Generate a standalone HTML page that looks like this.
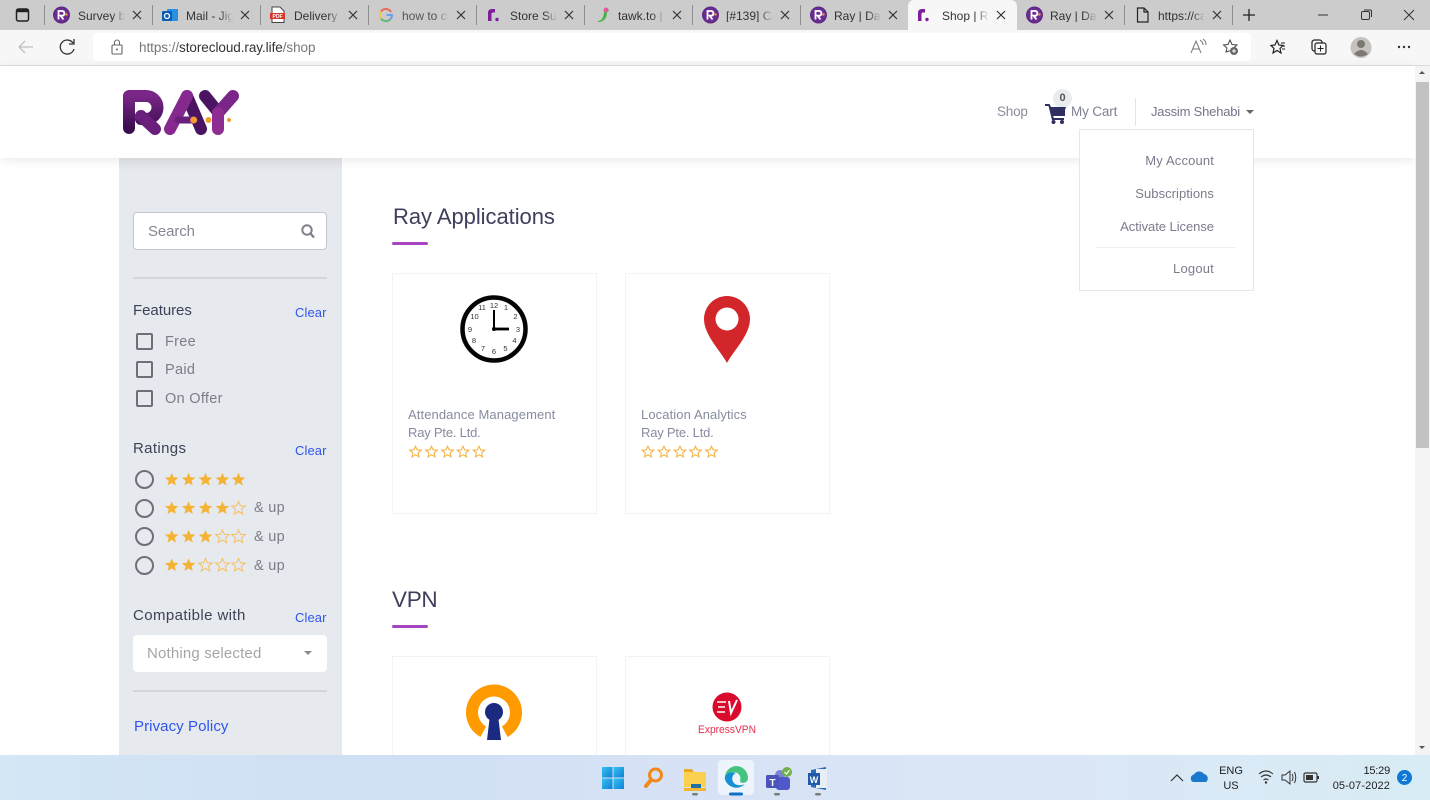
<!DOCTYPE html>
<html><head><meta charset="utf-8"><title>Shop | Ray</title>
<style>
*{box-sizing:border-box}
html,body{margin:0;padding:0;width:1430px;height:800px;overflow:hidden;background:#fff;font-family:"Liberation Sans",sans-serif}
.a{position:absolute;white-space:nowrap;line-height:1}
.tabt{font-size:12px;color:#333;top:10px;width:47px;overflow:hidden;-webkit-mask-image:linear-gradient(90deg,#000 72%,transparent);mask-image:linear-gradient(90deg,#000 72%,transparent)}
.sep{position:absolute;top:5px;width:1px;height:20px;background:#8e8e8e}
.g{color:#7d7d8a;font-size:14.5px;letter-spacing:.3px}
.h{color:#3f4256;font-size:15px;letter-spacing:.35px}
.c{color:#2f55f0;font-size:13px;letter-spacing:.1px}
.cb{position:absolute;left:136px;width:17px;height:17px;border:2px solid #6f6f7c;border-radius:2px}
.rd{position:absolute;left:135px;width:19px;height:19px;border:2px solid #6f6f7c;border-radius:50%}
.card{position:absolute;width:205px;background:#fff;border:1px solid #f2f3f7}
.ct{color:#868ba0;font-size:13px;letter-spacing:.1px}
.m{color:#7b7b8c;font-size:13px;letter-spacing:.2px;text-align:right;right:216px}
.n{color:#74748a;font-size:13.5px;letter-spacing:0}
</style></head>
<body>
<svg width="0" height="0" style="position:absolute"><defs>
<path id="st" d="M0-6.600 1.900-2.200 6.800-1.900 3 1.200 4.200 6 0 3.400-4.200 6-3 1.200-6.800-1.900-1.900-2.200Z"/>
<g id="r"><circle r="8.5" cx="8.5" cy="8.5" fill="#5f2a86"/><circle cx="8.5" cy="8.5" r="7" fill="#6b2c91"/><path d="M5.5 13V4.5H9.5A2.4 2.4 0 0 1 9.5 9.2H7.5L10.5 13" fill="none" stroke="#fff" stroke-width="1.8"/><circle cx="13.5" cy="8" r="1.2" fill="#f39a32"/></g>
<g id="rs"><path d="M0 13V5Q0 1 4 1H7V4.500H5Q3.500 4.500 3.500 6V13Z" fill="#7d1f9a"/><circle cx="9" cy="11.500" r="1.700" fill="#7d1f9a"/></g>
<g id="x"><path d="M0 0 8 8M8 0 0 8" stroke="#333" stroke-width="1.200" fill="none"/></g>
</defs></svg>

<!-- tab strip -->
<div class="a" style="left:0;top:0;width:1430px;height:30px;background:#cccccc"></div>
<svg class="a" style="left:15px;top:7px" width="16" height="16"><rect x="1.500" y="2" width="12" height="12" rx="2" fill="none" stroke="#222" stroke-width="1.500"/><rect x="1.500" y="2" width="12" height="3.200" fill="#222"/></svg>
<div class="sep" style="left:44px"></div><div class="sep" style="left:152px"></div><div class="sep" style="left:260px"></div><div class="sep" style="left:368px"></div><div class="sep" style="left:476px"></div><div class="sep" style="left:584px"></div><div class="sep" style="left:692px"></div><div class="sep" style="left:800px"></div><div class="sep" style="left:1124px"></div><div class="sep" style="left:1232px"></div>
<div class="a" style="left:908px;top:0;width:109px;height:31px;background:#f7f7f7;border-radius:6px 6px 0 0"></div>

<svg class="a" style="left:0;top:0" width="1430" height="30">
<use href="#r" x="53" y="6.500"/>
<g transform="translate(162,8)"><rect x="5" y="1" width="11" height="12" rx="1" fill="#2a8fe0"/><rect x="0" y="3" width="10" height="10" rx="1" fill="#0a5fb4"/><circle cx="5" cy="8" r="2.500" fill="none" stroke="#fff" stroke-width="1.300"/></g>
<g transform="translate(270,7)"><path d="M2 0H10L14 4V15.500H2Z" fill="#fff" stroke="#444"/><rect x="0" y="6" width="15" height="6" fill="#d9352b"/><text x="7.500" y="11" text-anchor="middle" font-family="Liberation Sans,sans-serif" font-size="5" font-weight="bold" fill="#fff">PDF</text></g>
<g transform="translate(379,8)" fill="none" stroke-width="2"><path d="M12 4A6 6 0 0 0 2 3.500" stroke="#ea6a5f"/><path d="M2 3.500A6 6 0 0 0 2 10.500" stroke="#f3c74f"/><path d="M2 10.500A6 6 0 0 0 11 11.500" stroke="#62b878"/><path d="M11 11.500A6 6 0 0 0 13 7H7.500" stroke="#6d9df0"/></g>
<use href="#rs" x="488" y="8"/><use href="#rs" x="918" y="8"/>
<g transform="translate(595,7)"><path d="M3 14C6 14 9 11 9 4L13 2 14 4 12 5C12 11 9 15 3 15Z" fill="#43b649"/><circle cx="11" cy="3" r="2.500" fill="#e45a9b"/></g>
<use href="#r" x="702" y="6.500"/><use href="#r" x="810" y="6.500"/><use href="#r" x="1026" y="6.500"/>
<g transform="translate(1136,7)"><path d="M1.500 1H8L12 5V15H1.500ZM8 1V5H12" fill="none" stroke="#222" stroke-width="1.200"/></g>
<use href="#x" x="133" y="11"/><use href="#x" x="241" y="11"/><use href="#x" x="349" y="11"/><use href="#x" x="457" y="11"/><use href="#x" x="565" y="11"/><use href="#x" x="673" y="11"/><use href="#x" x="781" y="11"/><use href="#x" x="889" y="11"/><use href="#x" x="997" y="11"/><use href="#x" x="1105" y="11"/><use href="#x" x="1213" y="11"/>
<path d="M1243 15H1255M1249 9V21" stroke="#222" stroke-width="1.300"/>
<path d="M1318 15H1328" stroke="#333"/>
<rect x="1361.500" y="11.500" width="8" height="8" rx="1.500" fill="none" stroke="#333"/><path d="M1364 10H1370.500Q1371.500 10 1371.500 11V17" fill="none" stroke="#333"/>
<path d="M1404 10 1414 20M1414 10 1404 20" stroke="#333"/>
</svg>
<div class="a tabt" style="left:78px">Survey bar</div>
<div class="a tabt" style="left:186px">Mail - Jigar</div>
<div class="a tabt" style="left:294px">Delivery Sc</div>
<div class="a tabt" style="left:402px;color:#555">how to cre</div>
<div class="a tabt" style="left:510px">Store Subs</div>
<div class="a tabt" style="left:618px">tawk.to | In</div>
<div class="a tabt" style="left:726px">[#139] CA</div>
<div class="a tabt" style="left:834px">Ray | Dash</div>
<div class="a tabt" style="left:942px">Shop | Ray</div>
<div class="a tabt" style="left:1050px">Ray | Dash</div>
<div class="a tabt" style="left:1158px">https://cal</div>

<!-- toolbar -->
<div class="a" style="left:0;top:30px;width:1430px;height:36px;background:#f7f7f7;border-bottom:1px solid #dcdcdc"></div>
<div class="a" style="left:93px;top:33px;width:1158px;height:28px;background:#fff;border-radius:4px"></div>
<svg class="a" style="left:0;top:30px" width="1430" height="36">
<path d="M19 17H33M19 17 25 11M19 17 25 23" fill="none" stroke="#c0c0c0" stroke-width="1.300"/>
<path d="M73 13A7 7 0 1 0 74 19M74 9V14H69" fill="none" stroke="#333" stroke-width="1.300"/>
<rect x="112" y="15" width="10" height="9" rx="1" fill="none" stroke="#666" stroke-width="1.100"/><path d="M114.500 15V12.500A2.500 2.500 0 0 1 119.500 12.500V15" fill="none" stroke="#666" stroke-width="1.100"/><circle cx="117" cy="19.500" r="1" fill="#666"/>
<path d="M1191 23 1196 11 1201 23M1193 19H1199M1200 10Q1203 12 1203 15M1203 9Q1206 11 1206 15" fill="none" stroke="#777" stroke-width="1"/>
<path d="M1230 10 1232 14.500 1237 15 1233.500 18 1234 21H1229L1226 22 1227 18 1223.500 15 1228 14.500Z" fill="none" stroke="#444"/><circle cx="1234" cy="21" r="4" fill="#666"/><path d="M1232 21H1236M1234 19V23" stroke="#fff"/>
<path d="M1277 10.500 1279 15 1283 15.500 1280 18.500 1281 23 1277 20.500 1273 23 1274 18.500 1271 15.500 1275 15Z" fill="none" stroke="#222" stroke-width="1.200"/><path d="M1281 13H1285M1282 16H1285M1282 19H1285" stroke="#222"/>
<rect x="1312" y="10" width="10" height="11" rx="2.500" fill="none" stroke="#222" stroke-width="1.200"/><rect x="1315" y="13" width="11" height="11" rx="2" fill="#f7f7f7" stroke="#222" stroke-width="1.200"/><path d="M1320.500 15.500V21.500M1317.500 18.500H1323.500" stroke="#222"/>
<circle cx="1361" cy="17.500" r="10.500" fill="#c6c3bf"/><circle cx="1361" cy="14" r="4" fill="#7c7873"/><path d="M1354 24Q1361 16 1368 24Q1361 29 1354 24Z" fill="#7c7873"/>
<circle cx="1399" cy="17" r="1.200" fill="#333"/><circle cx="1404" cy="17" r="1.200" fill="#333"/><circle cx="1409" cy="17" r="1.200" fill="#333"/>
</svg>
<div class="a" style="left:139px;top:40.500px;font-size:13.500px;color:#777;letter-spacing:-.06px">https://<span style="color:#333">storecloud.ray.life</span>/shop</div>

<!-- header -->
<div class="a" style="left:0;top:66px;width:1415px;height:92px;background:#fff;box-shadow:0 2px 10px rgba(0,0,0,.09)"></div>

<!-- sidebar -->
<div class="a" style="left:119px;top:158px;width:223px;height:597px;background:#e6e9ed"></div>
<div class="a" style="left:119px;top:158px;width:223px;height:12px;background:linear-gradient(180deg,rgba(0,0,0,.07),rgba(0,0,0,0))"></div>

<svg class="a" style="left:119px;top:86px" width="125" height="54" viewBox="119 86 125 54">
<defs><linearGradient id="lg2" x1="0" y1="0" x2="0" y2="1"><stop offset="0" stop-color="#7a2688"/><stop offset="1" stop-color="#3a0e4e"/></linearGradient></defs>
<g fill="none" stroke-width="12" stroke-linecap="round" stroke-linejoin="round">
<path d="M129 128V96H146A11.500 11.500 0 0 1 146 119H141" stroke="url(#lg2)"/>
<path d="M141 116 155 129" stroke="#6a1f7c"/>
<path d="M187 96 201 129" stroke="#4a1460"/><path d="M170 129 187 96" stroke="#86298f"/><path d="M178 120H192" stroke="#6a1f7c" stroke-width="7"/>
<path d="M205 96 218 112" stroke="#4a1460"/><path d="M233 96 218 113" stroke="#7a2688"/><path d="M218 113V129" stroke="#8d2d92"/>
</g>
<circle cx="193.700" cy="120" r="3.500" fill="#f39a32"/><circle cx="208.500" cy="120" r="3" fill="#f39a32"/><circle cx="229" cy="120" r="2" fill="#f39a32"/>
</svg>

<div class="a n" style="left:997px;top:105px;color:#8a8d9c;letter-spacing:-.2px">Shop</div>
<div class="a" style="left:1053px;top:89px;width:19px;height:19px;border-radius:50%;background:#e9ecef;color:#555;font-size:11px;text-align:center;line-height:19px;font-weight:bold">0</div>
<svg class="a" style="left:1045px;top:102px" width="22" height="22"><path d="M0 2H4.500L6 5H21L18 14H8L9 16H19V18H7L3.500 4H0Z" fill="#2e2e60"/><rect x="6" y="5" width="14" height="9" fill="#2e2e60"/><circle cx="8.500" cy="20" r="2" fill="#2e2e60"/><circle cx="17" cy="20" r="2" fill="#2e2e60"/></svg>
<div class="a n" style="left:1071px;top:105px;color:#7e8192;letter-spacing:-.15px">My Cart</div>
<div class="a" style="left:1135px;top:98px;width:1px;height:28px;background:#e4e4e8"></div>
<div class="a n" style="left:1151px;top:105px;font-size:13px;letter-spacing:-.2px">Jassim Shehabi</div>
<div class="a" style="left:1246px;top:110px;width:0;height:0;border:4px solid transparent;border-top-color:#666;border-bottom:0"></div>

<!-- dropdown -->
<div class="a" style="left:1079px;top:129px;width:175px;height:162px;background:#fff;border:1px solid #e6e6f0"></div>
<div class="a m" style="top:154px;letter-spacing:.15px">My Account</div>
<div class="a m" style="top:187px;letter-spacing:.05px">Subscriptions</div>
<div class="a m" style="top:220px;letter-spacing:-.05px">Activate License</div>
<div class="a" style="left:1096px;top:247px;width:140px;height:1px;background:#eeeeef"></div>
<div class="a m" style="top:262px">Logout</div>

<div class="a" style="left:133px;top:212px;width:194px;height:38px;background:#fff;border:1px solid #c4c5cf;border-radius:4px"></div>
<div class="a g" style="left:148px;top:224px;color:#858793;font-size:15px;letter-spacing:-.1px">Search</div>
<svg class="a" style="left:300px;top:223px" width="16" height="17"><circle cx="7" cy="7" r="4.700" fill="none" stroke="#80808c" stroke-width="2"/><path d="M10.500 10.500 14 14.500" stroke="#80808c" stroke-width="2.400"/></svg>
<div class="a" style="left:133px;top:277px;width:194px;height:2px;background:#d3d5da"></div>

<div class="a h" style="left:133px;top:303px;letter-spacing:-.05px">Features</div>
<div class="a c" style="left:295px;top:306px">Clear</div>
<div class="cb" style="top:333px"></div><div class="a g" style="left:165px;top:334.500px">Free</div>
<div class="cb" style="top:361px"></div><div class="a g" style="left:165px;top:363px">Paid</div>
<div class="cb" style="top:390px"></div><div class="a g" style="left:165px;top:392px">On Offer</div>

<div class="a h" style="left:133px;top:441px">Ratings</div>
<div class="a c" style="left:295px;top:444px">Clear</div>
<div class="rd" style="top:470px"></div><div class="rd" style="top:498.500px"></div><div class="rd" style="top:527px"></div><div class="rd" style="top:555.500px"></div>
<svg class="a" style="left:0;top:0" width="340" height="600">
<g fill="#f5b335"><use href="#st" x="171.700" y="479.500"/><use href="#st" x="188.600" y="479.500"/><use href="#st" x="205.500" y="479.500"/><use href="#st" x="222.400" y="479.500"/><use href="#st" x="238.500" y="479.500"/>
<use href="#st" x="171.700" y="508"/><use href="#st" x="188.600" y="508"/><use href="#st" x="205.500" y="508"/><use href="#st" x="222.400" y="508"/>
<use href="#st" x="171.700" y="536.500"/><use href="#st" x="188.600" y="536.500"/><use href="#st" x="205.500" y="536.500"/>
<use href="#st" x="171.700" y="565"/><use href="#st" x="188.600" y="565"/></g>
<g fill="none" stroke="#f5c063" stroke-width="1"><use href="#st" x="238.500" y="508"/>
<use href="#st" x="222.400" y="536.500"/><use href="#st" x="238.500" y="536.500"/>
<use href="#st" x="205.500" y="565"/><use href="#st" x="222.400" y="565"/><use href="#st" x="238.500" y="565"/></g>
</svg>
<div class="a g" style="left:254px;top:501px">&amp; up</div>
<div class="a g" style="left:254px;top:530px">&amp; up</div>
<div class="a g" style="left:254px;top:558.500px">&amp; up</div>

<div class="a h" style="left:133px;top:607.500px;letter-spacing:.4px">Compatible with</div>
<div class="a c" style="left:295px;top:611px">Clear</div>
<div class="a" style="left:133px;top:635px;width:194px;height:37px;background:#fff;border-radius:4px"></div>
<div class="a" style="left:147px;top:646px;font-size:15px;color:#a5a5a8;letter-spacing:.17px">Nothing selected</div>
<div class="a" style="left:304px;top:651px;width:0;height:0;border:4.500px solid transparent;border-top-color:#8a8a8f;border-bottom:0"></div>
<div class="a" style="left:133px;top:690px;width:194px;height:2px;background:#d3d5da"></div>
<div class="a" style="left:134px;top:718.500px;font-size:15px;color:#2f55f0;letter-spacing:.08px">Privacy Policy</div>

<!-- main -->
<div class="a" style="left:393px;top:206px;font-size:22px;color:#3d3f5c;letter-spacing:-.05px">Ray Applications</div>
<div class="a" style="left:392px;top:242px;width:36px;height:3px;background:#a745c0;border-radius:2px"></div>

<div class="card" style="left:392px;top:273px;height:241px"></div>
<div class="card" style="left:625px;top:273px;height:241px"></div>

<svg class="a" style="left:458px;top:293px" width="72" height="72" viewBox="-36 -36 72 72">
<circle r="31.500" fill="#fff" stroke="#050505" stroke-width="4.500"/>
<g font-family="Liberation Sans,sans-serif" font-size="7.500" text-anchor="middle" fill="#333">
<text x="0" y="-21">12</text><text x="12" y="-19">1</text><text x="21.500" y="-10">2</text><text x="24" y="3">3</text><text x="20.500" y="14">4</text><text x="11.500" y="22">5</text><text x="0" y="25">6</text><text x="-11" y="22">7</text><text x="-20" y="14">8</text><text x="-24" y="3">9</text><text x="-19.500" y="-10">10</text><text x="-12" y="-19">11</text>
</g>
<path d="M0 0V-19" stroke="#000" stroke-width="2"/><path d="M0 0H15" stroke="#000" stroke-width="2.800"/><circle r="2" fill="#000"/>
</svg>
<svg class="a" style="left:700px;top:292px" width="54" height="74" viewBox="700 292 54 74">
<path fill-rule="evenodd" d="M727 363C720 350 704 335 704 319A23 23 0 0 1 750 319C750 335 734 350 727 363ZM727 307.500A11.500 11.500 0 1 0 727.010 330.500A11.500 11.500 0 1 0 727 307.500Z" fill="#d2262b"/>
</svg>

<div class="a ct" style="left:408px;top:408px">Attendance Management</div>
<div class="a ct" style="left:408px;top:426px;letter-spacing:-.2px">Ray Pte. Ltd.</div>
<div class="a ct" style="left:641px;top:408px">Location Analytics</div>
<div class="a ct" style="left:641px;top:426px;letter-spacing:-.2px">Ray Pte. Ltd.</div>
<svg class="a" style="left:400px;top:440px" width="340" height="24">
<g fill="none" stroke="#f3b03c" stroke-width="1.200"><g transform="translate(15.500,11.800) scale(.85)"><use href="#st"/></g><g transform="translate(31.500,11.800) scale(.85)"><use href="#st"/></g><g transform="translate(47.500,11.800) scale(.85)"><use href="#st"/></g><g transform="translate(63,11.800) scale(.85)"><use href="#st"/></g><g transform="translate(79,11.800) scale(.85)"><use href="#st"/></g>
<g transform="translate(248,11.800) scale(.85)"><use href="#st"/></g><g transform="translate(264,11.800) scale(.85)"><use href="#st"/></g><g transform="translate(280,11.800) scale(.85)"><use href="#st"/></g><g transform="translate(295.500,11.800) scale(.85)"><use href="#st"/></g><g transform="translate(311.500,11.800) scale(.85)"><use href="#st"/></g></g>
</svg>

<div class="a" style="left:392px;top:589px;font-size:22.500px;color:#3d3f5c;letter-spacing:-.3px">VPN</div>
<div class="a" style="left:392px;top:625px;width:36px;height:3px;background:#a745c0;border-radius:2px"></div>
<div class="card" style="left:392px;top:656px;height:110px"></div>
<div class="card" style="left:625px;top:656px;height:110px"></div>
<svg class="a" style="left:460px;top:680px" width="68" height="70" viewBox="460 680 68 70">
<circle cx="494" cy="712.500" r="28" fill="#ff9a00"/><circle cx="494" cy="712.500" r="16" fill="#fff"/><path d="M494 712 476 745H512Z" fill="#fff"/>
<circle cx="494" cy="712" r="9" fill="#1b2a80"/><path d="M490 715 487 740H501L498 715Z" fill="#1b2a80"/>
</svg>
<svg class="a" style="left:690px;top:688px" width="74" height="50" viewBox="690 688 74 50">
<circle cx="727" cy="707" r="14.500" fill="#da0a2c"/>
<path d="M717 702H726M718 707H725M717 712H725" stroke="#fff" stroke-width="1.600"/><path d="M729 701 731 713 737 700" fill="none" stroke="#fff" stroke-width="2"/>
<text x="727" y="733" text-anchor="middle" font-family="Liberation Sans,sans-serif" font-size="11" fill="#ea2d4d" textLength="58" lengthAdjust="spacingAndGlyphs">ExpressVPN</text>
</svg>

<!-- scrollbar -->
<div class="a" style="left:1415px;top:66px;width:15px;height:689px;background:#f4f4f4"></div>
<div class="a" style="left:1416px;top:82px;width:13px;height:366px;background:#c2c2c2"></div>
<div class="a" style="left:1419px;top:71px;width:0;height:0;border:3.500px solid transparent;border-bottom-color:#555;border-top:0"></div>
<div class="a" style="left:1419px;top:746px;width:0;height:0;border:3.500px solid transparent;border-top-color:#555;border-bottom:0"></div>

<!-- taskbar -->
<div class="a" style="left:0;top:755px;width:1430px;height:45px;background:linear-gradient(90deg,#d3e7f5 0,#cfdff4 25%,#d8e2f6 50%,#dbe7f6 75%,#d8ecf5 100%)"></div>
<div class="a" style="left:718px;top:760px;width:36px;height:35px;background:#eef4fb;border-radius:4px"></div>
<svg class="a" style="left:590px;top:755px" width="250" height="45">
<defs><linearGradient id="wb" x1="0" y1="0" x2="1" y2="1"><stop offset="0" stop-color="#35c1f1"/><stop offset="1" stop-color="#0f80d7"/></linearGradient></defs>
<g fill="url(#wb)"><rect x="12" y="12" width="10.500" height="10.500"/><rect x="23.500" y="12" width="10.500" height="10.500"/><rect x="12" y="23.500" width="10.500" height="10.500"/><rect x="23.500" y="23.500" width="10.500" height="10.500"/></g>
<circle cx="65.500" cy="20" r="6" fill="none" stroke="#f08a1d" stroke-width="3"/><path d="M61 25 56 31" stroke="#f08a1d" stroke-width="4" stroke-linecap="round"/>
<path d="M94 14H102L104 17H116V32H94Z" fill="#fcd04f"/><path d="M94 14H102L104 17H94Z" fill="#e9a825"/><rect x="101" y="29" width="10" height="4" fill="#1c6fa8"/><rect x="94" y="33" width="22" height="3" fill="#f2b632"/>
<path d="M146 11A12 12 0 0 1 158 23C158 28 152 29 150 26.500C152 20 147 16 141 17.500C137 19 135 22 134.800 24A12 12 0 0 1 146 11Z" fill="#45c47e"/>
<path d="M134.800 24C135 18 141 16 146 18C141 20 141 27 146 29.500C150 31 153 30 155 29A12 12 0 0 1 134.800 24Z" fill="#1590d5"/>
<rect x="139" y="37.500" width="14" height="3" rx="1.500" fill="#0f6fc4"/>
<circle cx="190" cy="20" r="5" fill="#7b83d3"/><rect x="186" y="22" width="14" height="13" rx="3" fill="#5059c9"/><rect x="176" y="20" width="13" height="13" rx="1.500" fill="#4b53bc"/><text x="182.500" y="31" text-anchor="middle" font-family="Liberation Sans,sans-serif" font-size="10" font-weight="bold" fill="#fff">T</text>
<circle cx="197" cy="17" r="5" fill="#6fb04a"/><path d="M194.500 17 196.500 19 199.500 15" stroke="#fff" fill="none" stroke-width="1.200"/>
<path d="M221 15 236 12V35L221 32Z" fill="#2b6cb8"/><rect x="226" y="14" width="11" height="19" fill="#e8eef5"/><rect x="218" y="18" width="12" height="12" fill="#1e5aa8"/><text x="224" y="28" text-anchor="middle" font-family="Liberation Sans,sans-serif" font-size="9" font-weight="bold" fill="#fff">W</text>
<g fill="#7c7c7c"><rect x="102" y="38" width="6" height="2.500" rx="1.200"/><rect x="184" y="38" width="6" height="2.500" rx="1.200"/><rect x="225" y="38" width="6" height="2.500" rx="1.200"/></g>
</svg>
<svg class="a" style="left:1160px;top:755px" width="270" height="45">
<path d="M11 26 17 20 23 26" fill="none" stroke="#333" stroke-width="1.200"/>
<path d="M33 27A4 4 0 0 1 34 19.500A6 6 0 0 1 44 19A4.500 4.500 0 0 1 46 27Z" fill="#1a78d0"/>
<path d="M99 19Q106 13 113 19M101 22Q106 18 111 22M103.500 25Q106 23 108.500 25" fill="none" stroke="#333" stroke-width="1.100"/><circle cx="106" cy="27.500" r="1.200" fill="#333"/>
<path d="M122 20H125L130 16V29L125 25H122Z" fill="none" stroke="#333" stroke-width="1"/><path d="M132 19Q134 22.500 132 26M134.500 17Q137 22.500 134.500 28" fill="none" stroke="#333"/>
<rect x="144" y="18" width="13" height="9" rx="1.500" fill="none" stroke="#333" stroke-width="1.200"/><rect x="146" y="20" width="7" height="5" fill="#333"/><rect x="157.500" y="21" width="1.500" height="3" fill="#333"/>
<circle cx="244.500" cy="22.500" r="7.500" fill="#0f78d4"/>
<text x="244.500" y="26" text-anchor="middle" font-family="Liberation Sans,sans-serif" font-size="10" fill="#fff">2</text>
</svg>
<div class="a" style="left:1211px;top:765.500px;width:40px;text-align:center;font-size:11px;color:#222">ENG</div>
<div class="a" style="left:1211px;top:780.500px;width:40px;text-align:center;font-size:11px;color:#222">US</div>
<div class="a" style="left:1330px;top:765.500px;width:60px;text-align:right;font-size:11px;color:#222;letter-spacing:-.2px">15:29</div>
<div class="a" style="left:1320px;top:780.500px;width:70px;text-align:right;font-size:11px;color:#222;letter-spacing:.1px">05-07-2022</div>
</body></html>
